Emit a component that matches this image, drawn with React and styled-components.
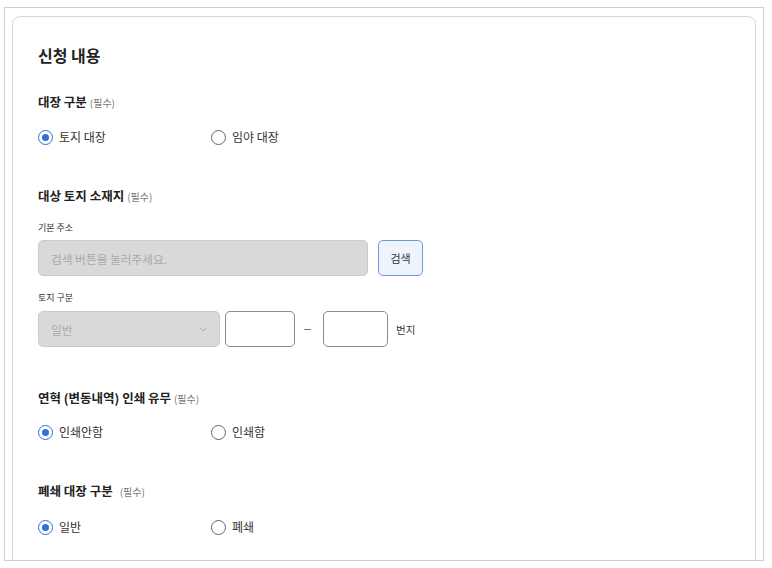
import { styled, createGlobalStyle } from "styled-components";

const GlobalStyle = createGlobalStyle`
  html, body {
    margin: 0;
    padding: 0;
    background: #ffffff;
  }
  body {
    font-family: "Noto Sans CJK KR", "Noto Sans", sans-serif;
    color: #222;
  }
`;

const Frame = styled.div`
  box-sizing: border-box;
  margin: 7px 0 0 4px;
  width: 760px;
  height: 554px;
  border: 1px solid #cfcfcf;
  padding: 8px 7px 0 7px;
  overflow: hidden;
`;

const Card = styled.div`
  box-sizing: border-box;
  min-height: 600px;
  border: 1px solid #d6d6d6;
  border-radius: 8px;
  padding: 26px 25px 40px 25px;
`;

const Title = styled.h2`
  margin: 0;
  font-size: 16px;
  line-height: 24px;
  font-weight: 700;
  color: #222;
`;

const Section = styled.section`
  margin-top: ${({ $gap }) => $gap}px;
`;

const Label = styled.div`
  height: 18px;
  font-size: 12.5px;
  line-height: 18px;
  font-weight: 700;
  color: #222;
  margin-bottom: ${({ $bottom }) => ($bottom === undefined ? 15 : $bottom)}px;
`;

const Required = styled.span`
  font-size: 10px;
  font-weight: 400;
  color: #777;
  margin-left: ${({ $wide }) => ($wide ? 7 : 3)}px;
`;

const RadioGroup = styled.div`
  display: flex;
  align-items: center;
  height: 20px;
`;

const RadioOption = styled.label`
  display: flex;
  align-items: center;
  gap: 6px;
  width: 173px;
  font-size: 12px;
  line-height: 20px;
  color: #333;
`;

const RadioCircle = styled.span`
  box-sizing: border-box;
  width: 15px;
  height: 15px;
  border-radius: 50%;
  border: 1px solid ${({ $on }) => ($on ? "#2f6fd6" : "#666")};
  display: flex;
  align-items: center;
  justify-content: center;
  background: #fff;

  &::after {
    content: "";
    width: 7px;
    height: 7px;
    border-radius: 50%;
    background: #2f6fd6;
    display: ${({ $on }) => ($on ? "block" : "none")};
  }
`;

const SubLabel = styled.div`
  height: 16px;
  font-size: 9px;
  line-height: 16px;
  color: #333;
  margin-top: ${({ $top }) => $top}px;
  margin-bottom: ${({ $bottom }) => $bottom}px;
`;

const FieldRow = styled.div`
  display: flex;
  align-items: center;
  gap: ${({ $gap }) => $gap || 10}px;
`;

const GreyBox = styled.div`
  box-sizing: border-box;
  height: 36px;
  width: ${({ $w }) => $w}px;
  background: #d9d9d9;
  border: 1px solid #cbcbcb;
  border-radius: 5px;
  display: flex;
  align-items: center;
  justify-content: space-between;
  padding: 0 12px;
  font-size: 11.7px;
  color: #a8a8a8;
`;

const SearchButton = styled.button`
  box-sizing: border-box;
  height: 36px;
  width: 45px;
  background: #edf4fd;
  border: 1px solid #6b9bd6;
  border-radius: 5px;
  font-family: inherit;
  font-size: 11px;
  color: #333;
  padding: 0;
`;

const TextBox = styled.div`
  box-sizing: border-box;
  height: 36px;
  width: ${({ $w }) => $w}px;
  background: #fff;
  border: 1px solid #8a8a8a;
  border-radius: 5px;
`;

const Dash = styled.span`
  width: 7px;
  height: 1px;
  background: #777;
  margin: 0 7px 0 4px;
`;

const Unit = styled.span`
  font-size: 10.5px;
  color: #333;
  margin-left: 3px;
`;

const Chevron = () => (
  <svg width="8" height="5" viewBox="0 0 8 5" fill="none">
    <path d="M1 1l3 3 3-3" stroke="#aaa" strokeWidth="1" />
  </svg>
);

const Radio = ({ on, children }) => (
  <RadioOption>
    <RadioCircle $on={on} />
    {children}
  </RadioOption>
);

const App = () => {
  return (
    <>
      <GlobalStyle />
      <Frame>
        <Card>
          <Title>신청 내용</Title>

          <Section $gap={26}>
            <Label $bottom={16}>
              대장 구분<Required>(필수)</Required>
            </Label>
            <RadioGroup>
              <Radio on>토지 대장</Radio>
              <Radio>임야 대장</Radio>
            </RadioGroup>
          </Section>

          <Section $gap={40}>
            <Label $bottom={0}>
              대상 토지 소재지<Required>(필수)</Required>
            </Label>
            <SubLabel $top={15} $bottom={4}>기본 주소</SubLabel>
            <FieldRow $gap={10}>
              <GreyBox $w={330}>검색 버튼을 눌러주세요.</GreyBox>
              <SearchButton>검색</SearchButton>
            </FieldRow>
            <SubLabel $top={14} $bottom={5}>토지 구분</SubLabel>
            <FieldRow $gap={5}>
              <GreyBox $w={182}>
                일반
                <Chevron />
              </GreyBox>
              <TextBox $w={70} />
              <Dash />
              <TextBox $w={65} />
              <Unit>번지</Unit>
            </FieldRow>
          </Section>

          <Section $gap={42}>
            <Label>
              연혁 (변동내역) 인쇄 유무<Required>(필수)</Required>
            </Label>
            <RadioGroup>
              <Radio on>인쇄안함</Radio>
              <Radio>인쇄함</Radio>
            </RadioGroup>
          </Section>

          <Section $gap={40}>
            <Label $bottom={17}>
              폐쇄 대장 구분<Required $wide>(필수)</Required>
            </Label>
            <RadioGroup>
              <Radio on>일반</Radio>
              <Radio>폐쇄</Radio>
            </RadioGroup>
          </Section>
        </Card>
      </Frame>
    </>
  );
};

export default App;
